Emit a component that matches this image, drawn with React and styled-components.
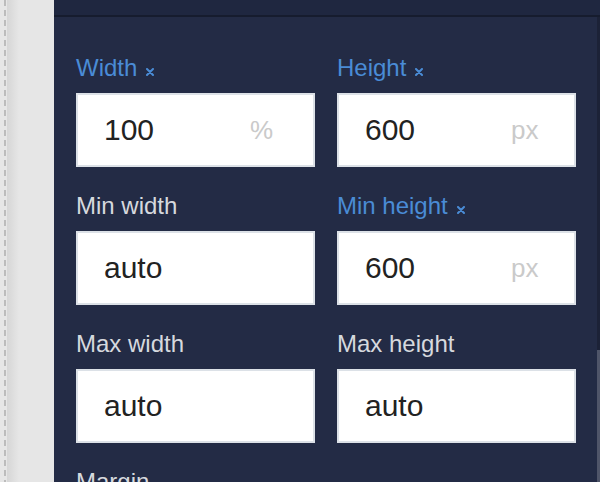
import styled, { createGlobalStyle } from 'styled-components';

const GlobalStyle = createGlobalStyle`
  html, body {
    margin: 0;
    padding: 0;
    background: #232b45;
  }
  body {
    font-family: "Liberation Sans", Arial, sans-serif;
  }
`;

const Screen = styled.div`
  display: flex;
  width: 600px;
  height: 482px;
  overflow: hidden;
`;

const Gutter = styled.div`
  width: 54px;
  flex: none;
  display: flex;
  background: #e6e6e6;
`;

const DashLine = styled.div`
  width: 2px;
  margin-left: 4px;
  background: repeating-linear-gradient(
    to bottom,
    #bcbcbc 0 6px,
    transparent 6px 10px
  );
`;

const Shade = styled.div`
  width: 12px;
  margin-left: 1px;
  background: linear-gradient(to right, #d6d6d6, #e6e6e6);
`;

const Panel = styled.div`
  flex: 1;
  display: flex;
  flex-direction: column;
  background: #232b45;
`;

const TopBar = styled.div`
  height: 15px;
  flex: none;
  background: #1f2740;
  border-bottom: 2px solid #161c2e;
`;

const Body = styled.div`
  flex: 1;
  display: flex;
  min-height: 0;
`;

const Content = styled.div`
  flex: 1;
  padding: 37px 21px 0 22px;
`;

const Scrollbar = styled.div`
  width: 3px;
  flex: none;
  display: flex;
  flex-direction: column;
  background: #1c2237;
`;

const Thumb = styled.div`
  margin-top: 333px;
  flex: 1;
  background: #4f5569;
`;

const Grid = styled.div`
  display: grid;
  grid-template-columns: 239px 239px;
  column-gap: 22px;
  row-gap: 25px;
`;

const Field = styled.div`
  display: flex;
  flex-direction: column;
`;

const Label = styled.div`
  display: flex;
  align-items: baseline;
  font-size: 24px;
  line-height: 28px;
  height: 28px;
  margin-bottom: 11px;
  color: ${(p) => (p.$set ? '#4a8cd6' : '#d6d9de')};
  white-space: nowrap;
`;

const Clear = styled.svg`
  width: 8px;
  height: 8px;
  margin-left: 9px;
  flex: none;
`;

const Box = styled.div`
  height: 74px;
  box-sizing: border-box;
  display: flex;
  align-items: center;
  background: #ffffff;
  border: 2px solid #dce1e7;
  padding-left: 26px;
`;

const Value = styled.span`
  flex: 1;
  font-size: 30px;
  color: #222222;
`;

const Unit = styled.span`
  width: 63px;
  flex: none;
  font-size: 26px;
  color: #cacaca;
`;

const fields = [
  { label: 'Width', set: true, value: '100', unit: '%' },
  { label: 'Height', set: true, value: '600', unit: 'px' },
  { label: 'Min width', value: 'auto' },
  { label: 'Min height', set: true, value: '600', unit: 'px' },
  { label: 'Max width', value: 'auto' },
  { label: 'Max height', value: 'auto' },
  { label: 'Margin', value: '0' },
];

function ClearIcon() {
  return (
    <Clear viewBox="0 0 8 8">
      <path d="M1 1 L7 7 M7 1 L1 7" stroke="#4a8cd6" strokeWidth="2" strokeLinecap="round" />
    </Clear>
  );
}

export default function App() {
  return (
    <>
      <GlobalStyle />
      <Screen>
        <Gutter>
          <DashLine />
          <Shade />
        </Gutter>
        <Panel>
          <TopBar />
          <Body>
            <Content>
              <Grid>
                {fields.map((f) => (
                  <Field key={f.label}>
                    <Label $set={f.set}>
                      {f.label}
                      {f.set && <ClearIcon />}
                    </Label>
                    <Box>
                      <Value>{f.value}</Value>
                      {f.unit && <Unit>{f.unit}</Unit>}
                    </Box>
                  </Field>
                ))}
              </Grid>
            </Content>
            <Scrollbar>
              <Thumb />
            </Scrollbar>
          </Body>
        </Panel>
      </Screen>
    </>
  );
}
